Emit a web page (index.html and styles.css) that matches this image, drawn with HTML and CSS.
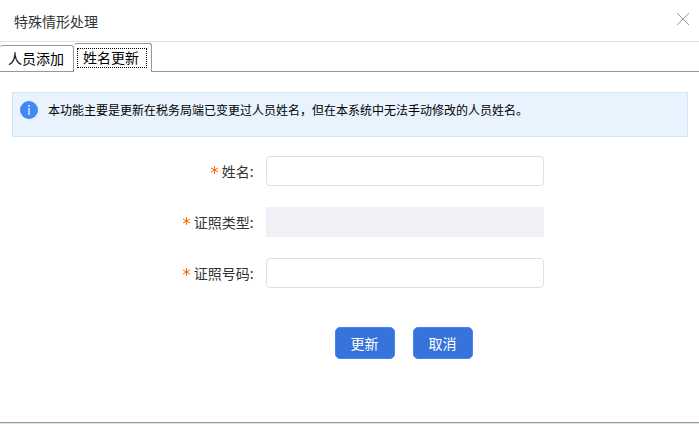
FILE: index.html
```html
<!DOCTYPE html>
<html lang="zh-CN">
<head>
    <meta charset="UTF-8">
    <meta name="viewport" content="width=device-width, initial-scale=1.0">
    <title>特殊情形处理</title>
    <link rel="stylesheet" href="styles.css">
</head>
<body>
    <div class="dialog">
        <header class="dialog-header">
            <h1 class="dialog-title">特殊情形处理</h1>
            <button type="button" class="close-button" aria-label="关闭">
                <svg width="14" height="14" viewBox="0 0 14 14">
                    <path d="M1 1 L13 13 M13 1 L1 13" fill="none" stroke="#999" stroke-width="1"/>
                </svg>
            </button>
        </header>

        <div class="tabs" role="tablist">
            <button type="button" class="tab" role="tab" aria-selected="false">人员添加</button>
            <button type="button" class="tab active" role="tab" aria-selected="true"><span>姓名更新</span></button>
        </div>

        <main class="panel">
            <div class="notice">
                <svg class="notice-icon" width="18" height="18" viewBox="0 0 18 18">
                    <circle cx="9" cy="9" r="9" fill="#4288f5"/>
                    <rect x="8" y="4" width="2" height="2" fill="#b4d0fb"/>
                    <rect x="8" y="7" width="2" height="7" fill="#b4d0fb"/>
                </svg>
                <p>本功能主要是更新在税务局端已变更过人员姓名，但在本系统中无法手动修改的人员姓名。</p>
            </div>

            <form class="update-form">
                <div class="form-row">
                    <label for="name"><svg class="required" width="7" height="10" viewBox="0 0 7 10"><path d="M3.5 0V8 M0 2L7 6 M7 2L0 6"/></svg>姓名:</label>
                    <input type="text" id="name" class="field">
                </div>
                <div class="form-row">
                    <label for="id-type"><svg class="required" width="7" height="10" viewBox="0 0 7 10"><path d="M3.5 0V8 M0 2L7 6 M7 2L0 6"/></svg>证照类型:</label>
                    <select id="id-type" class="field" disabled></select>
                </div>
                <div class="form-row">
                    <label for="id-number"><svg class="required" width="7" height="10" viewBox="0 0 7 10"><path d="M3.5 0V8 M0 2L7 6 M7 2L0 6"/></svg>证照号码:</label>
                    <input type="text" id="id-number" class="field">
                </div>
                <div class="form-actions">
                    <button type="button" class="btn">更新</button>
                    <button type="button" class="btn">取消</button>
                </div>
            </form>
        </main>
    </div>
</body>
</html>
```

FILE: styles.css
```css
* {
    margin: 0;
    padding: 0;
    box-sizing: border-box;
}

body,
button,
input,
select {
    font-family: 'Noto Sans CJK SC', sans-serif;
    font-size: 14px;
}

body {
    background: #fff;
    color: #333;
}

.dialog {
    display: flex;
    flex-direction: column;
    min-height: 100vh;
    border-bottom: 1px solid #e0e3e1;
}

.dialog-header {
    display: flex;
    align-items: center;
    justify-content: space-between;
    height: 42px;
    padding: 0 9px 0 14px;
    border-bottom: 1px solid #e3e3e3;
}

.dialog-title {
    font-size: 14px;
    font-weight: normal;
}

.close-button {
    display: flex;
    padding: 0 0 4px;
    border: none;
    background: none;
    cursor: pointer;
}

/* Tabs */
.tabs {
    display: flex;
    align-items: flex-end;
    height: 30px;
}

.tabs::after {
    content: '';
    flex: 1;
    border-bottom: 1px solid #919b9c;
}

.tab {
    height: 27px;
    padding: 0 9px 2px 8px;
    border: 1px solid #919b9c;
    border-left: none;
    border-radius: 3px 3px 0 0;
    background: #fff;
    color: #000;
    line-height: 20px;
    cursor: pointer;
}

.tab.active {
    height: 29px;
    padding: 0 4px 0 3px;
    border-bottom: none;
}

.tab.active span {
    display: block;
    padding: 0 7px 1px 5px;
    border: 1px dotted #000;
    line-height: 17px;
}

/* Content */
.panel {
    flex: 1;
    padding: 20px 11px 20px 12px;
    border-bottom: 1px solid #919b9c;
}

.notice {
    display: flex;
    align-items: flex-start;
    gap: 10px;
    min-height: 45px;
    padding: 8px 7px;
    border: 1px solid #cfe5fb;
    background: #e8f3fe;
    color: #000;
    font-size: 12px;
    line-height: 18px;
}

.notice-icon {
    flex: none;
}

/* The form spans the full panel, past the notice margins */
.update-form {
    display: flex;
    flex-direction: column;
    gap: 21px;
    margin: 19px -11px 0 -12px;
}

.form-row {
    display: flex;
    align-items: center;
}

.form-row label {
    display: flex;
    align-items: center;
    justify-content: flex-end;
    gap: 4px;
    width: 38%;
    padding-right: 12px;
}

.required {
    fill: none;
    stroke: #ff6a00;
    stroke-width: 1;
}

.field {
    flex: 0 1 278px;
    min-width: 0;
    height: 30px;
    padding: 0 8px;
    border: 1px solid #e0e0e3;
    border-radius: 4px;
    background: #fff;
    appearance: none;
}

.field:disabled {
    border: none;
    border-radius: 0;
    background: #f0f1f6;
    opacity: 1;
}

.form-actions {
    display: flex;
    justify-content: center;
    gap: 18px;
    max-width: 276px;
    margin: 18px 0 0 38%;
}

.btn {
    width: 60px;
    height: 32px;
    border: 1px solid #4285f4;
    border-radius: 5px;
    background: #3674dc;
    color: #fff;
    cursor: pointer;
}
```
